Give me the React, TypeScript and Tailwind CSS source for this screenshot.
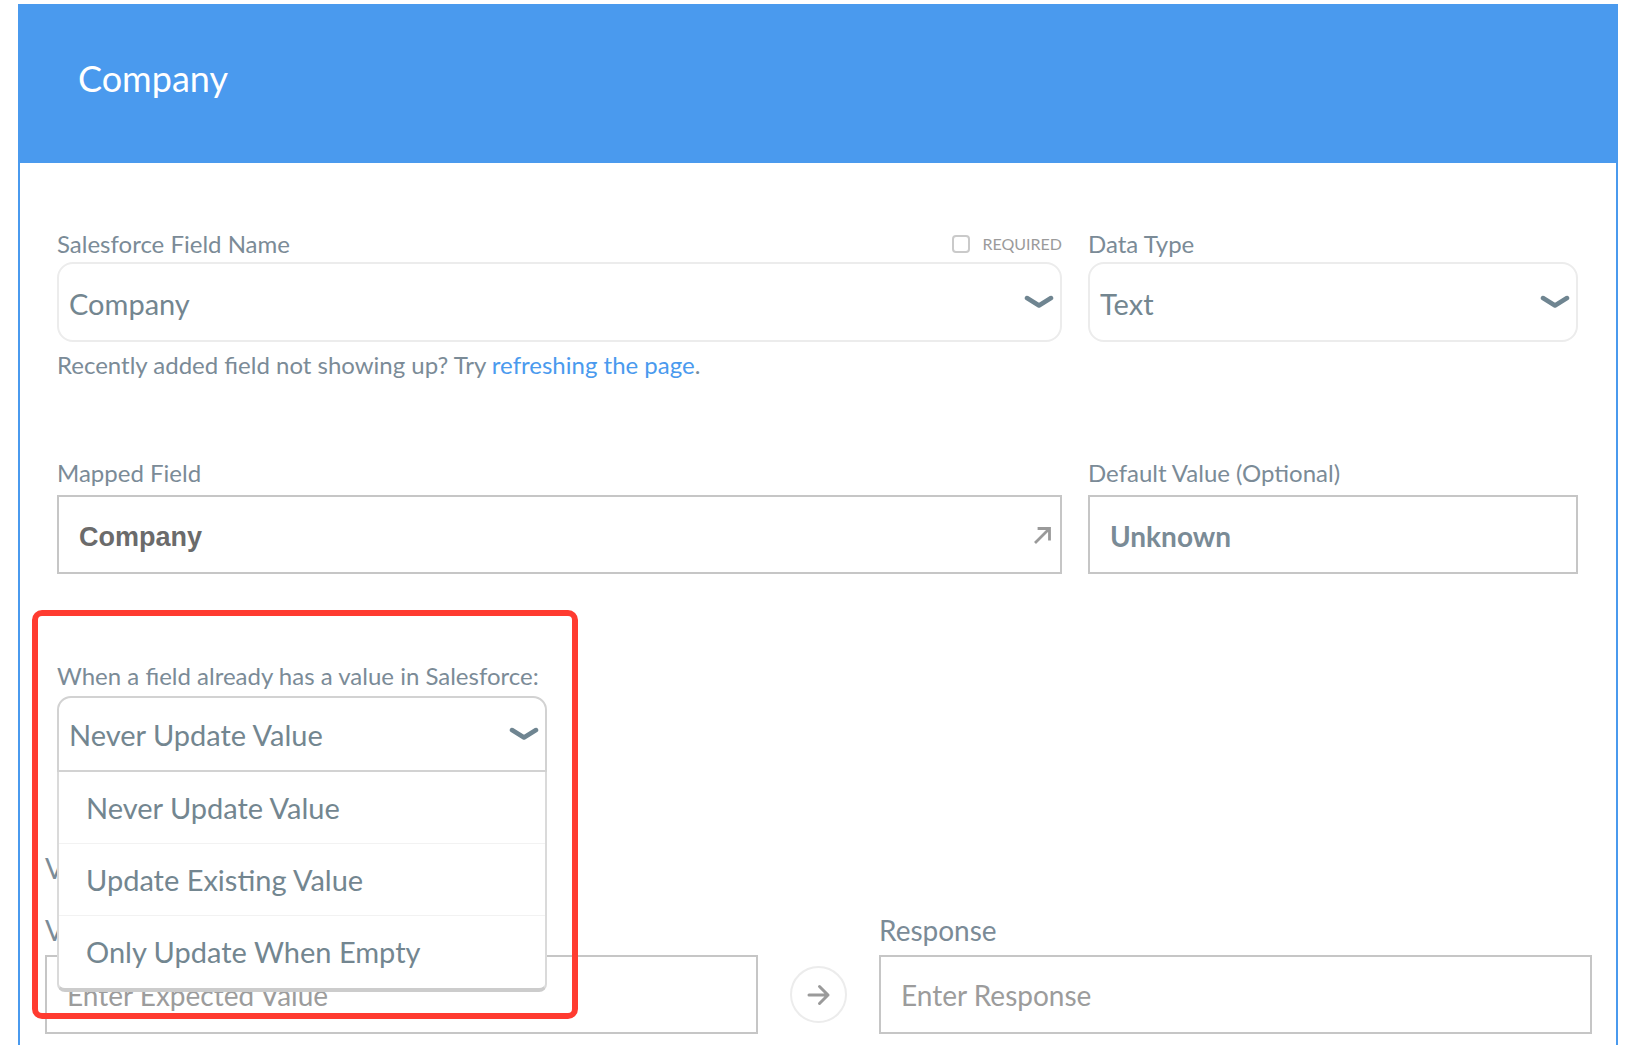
import React from "react";

const LABEL = "text-[24px] leading-[28px] text-[#7b8b97]";
const BIG_LABEL = "text-[28px] leading-[28px] text-[#7b8b97]";

function Chevron() {
  return (
    <svg width="30" height="14" viewBox="0 0 30 14" className="shrink-0">
      <path
        d="M3 3 L15 10.5 L27 3"
        fill="none"
        stroke="#6f8591"
        strokeWidth="4.5"
        strokeLinecap="round"
        strokeLinejoin="round"
      />
    </svg>
  );
}

function ExpandArrow() {
  return (
    <svg width="22" height="22" viewBox="0 0 22 22" className="shrink-0">
      <path d="M4 18 L17 5 M7 4.5 H17.5 V15" fill="none" stroke="#9a9a9a" strokeWidth="2.8" strokeLinecap="square" />
    </svg>
  );
}

function RightArrow() {
  return (
    <svg width="28" height="28" viewBox="0 0 28 28">
      <path d="M4 14 H23 M14.5 5.5 L23 14 L14.5 22.5" fill="none" stroke="#9a9a9a" strokeWidth="3" strokeLinecap="round" strokeLinejoin="round" />
    </svg>
  );
}

const options = ["Never Update Value", "Update Existing Value", "Only Update When Empty"];

export default function App() {
  return (
    <div className="relative min-h-screen bg-white pt-[4px] font-['Lato','Noto_Sans',sans-serif]">
      <div className="ml-[18px] mr-[11px] min-h-[1041px] border-x-2 border-[#4a9aee]">
        {/* header */}
        <div className="-mx-[2px] h-[159px] bg-[#4a9aee] pl-[60px] pt-[52px]">
          <h1 className="text-[36px] leading-[44px] text-white">Company</h1>
        </div>

        <div className="pl-[37px] pr-[31px] pt-[67px]">
          {/* row 1 */}
          <div className="grid grid-cols-[1005px_490px] gap-x-[26px]">
            <div>
              <div className="mb-[4px] flex items-center justify-between">
                <span className={LABEL}>Salesforce Field Name</span>
                <label className="flex items-center gap-[12px]">
                  <span className="h-[18px] w-[18px] rounded-[4px] border-2 border-[#cacaca]" />
                  <span className="text-[16px] leading-[28px] text-[#9b9b9b]">REQUIRED</span>
                </label>
              </div>
              <div className="flex h-[80px] items-center justify-between rounded-[16px] border-2 border-[#ececec] pl-[10px] pr-[6px]">
                <span className="mt-[3px] text-[29px] text-[#738690]">Company</span>
                <Chevron />
              </div>
              <p className="mt-[8px] text-[24px] leading-[30px] text-[#7b8b97]">
                Recently added field not showing up? Try{" "}
                <a className="text-[#4a9aee]">refreshing the page</a>.
              </p>
            </div>
            <div>
              <div className="mb-[4px] flex items-center">
                <span className={LABEL}>Data Type</span>
              </div>
              <div className="flex h-[80px] items-center justify-between rounded-[16px] border-2 border-[#ececec] pl-[10px] pr-[6px]">
                <span className="mt-[3px] text-[29px] text-[#738690]">Text</span>
                <Chevron />
              </div>
            </div>
          </div>

          {/* row 2 */}
          <div className="mt-[79px] grid grid-cols-[1005px_490px] gap-x-[26px]">
            <div>
              <div className={`mb-[8px] ${LABEL}`}>Mapped Field</div>
              <div className="flex h-[79px] items-center justify-between border-2 border-[#c6c6c6] pl-[20px] pr-[6px]">
                <span className="mt-[5px] font-['Liberation_Sans',Arial,sans-serif] text-[27px] font-bold text-[#6b6b6b]">Company</span>
                <ExpandArrow />
              </div>
            </div>
            <div>
              <div className={`mb-[8px] ${LABEL}`}>Default Value (Optional)</div>
              <div className="flex h-[79px] items-center border-2 border-[#c6c6c6] pl-[20px]">
                <span className="mt-[2px] text-[28px] font-bold text-[#7a8b96]">Unknown</span>
              </div>
            </div>
          </div>

          {/* row 3 */}
          <div className="mt-[88px] w-[490px]">
            <div className={`mb-[6px] ${LABEL}`}>When a field already has a value in Salesforce:</div>
            <div className="relative">
              <div className="flex h-[76px] items-center justify-between rounded-t-[14px] border-2 border-[#d2d2d2] pl-[10px] pr-[6px]">
                <span className="mt-[2px] text-[29px] text-[#738690]">Never Update Value</span>
                <Chevron />
              </div>
              <ul className="absolute left-0 right-0 top-full z-10 rounded-b-[8px] border-x-2 border-b-4 border-x-[#dadada] border-b-[#cccccc] bg-white">
                {options.map((o, i) => (
                  <li
                    key={o}
                    className={`flex h-[72px] items-center pl-[27px] text-[29px] text-[#738690] ${
                      i < options.length - 1 ? "border-b border-[#f2f2f2]" : ""
                    }`}
                  >
                    {o}
                  </li>
                ))}
              </ul>
            </div>
          </div>

          {/* value mapping (partly behind the menu) */}
          <div className="-ml-[12px] -mr-[7px] mt-[82px]">
            <div className={BIG_LABEL}>Value Mapping</div>
            <div className="mt-[34px] grid grid-cols-[1fr_57px_1fr] gap-x-[32px]">
              <div className={`mb-[11px] ${BIG_LABEL}`}>Value</div>
              <div />
              <div className={`mb-[11px] ${BIG_LABEL}`}>Response</div>
              <div className="flex h-[79px] items-center border-2 border-[#c6c6c6] pl-[20px]">
                <span className="text-[28px] text-[#9c9c9c]">Enter Expected Value</span>
              </div>
              <div className="flex items-center justify-center">
                <div className="flex h-[57px] w-[57px] items-center justify-center rounded-full border-2 border-[#ececec]">
                  <RightArrow />
                </div>
              </div>
              <div className="flex h-[79px] items-center border-2 border-[#c6c6c6] pl-[20px]">
                <span className="text-[28px] text-[#9c9c9c]">Enter Response</span>
              </div>
            </div>
          </div>
        </div>
      </div>

      {/* highlight annotation */}
      <div className="pointer-events-none absolute left-[32px] top-[610px] z-20 h-[409px] w-[546px] rounded-[10px] border-[6px] border-[#ff3b30]" />
    </div>
  );
}
